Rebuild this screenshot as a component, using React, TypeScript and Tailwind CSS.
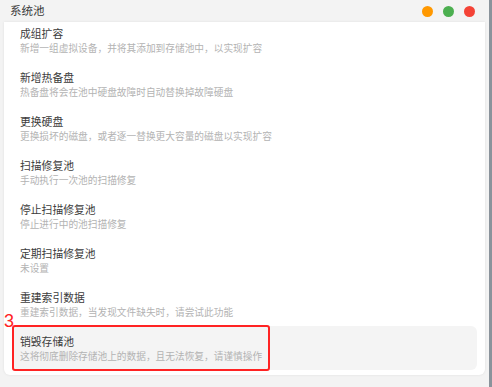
import React from "react";

interface PoolAction {
  title: string;
  desc: string;
}

const ACTIONS: PoolAction[] = [
  { title: "成组扩容", desc: "新增一组虚拟设备，并将其添加到存储池中，以实现扩容" },
  { title: "新增热备盘", desc: "热备盘将会在池中硬盘故障时自动替换掉故障硬盘" },
  { title: "更换硬盘", desc: "更换损坏的磁盘，或者逐一替换更大容量的磁盘以实现扩容" },
  { title: "扫描修复池", desc: "手动执行一次池的扫描修复" },
  { title: "停止扫描修复池", desc: "停止进行中的池扫描修复" },
  { title: "定期扫描修复池", desc: "未设置" },
  { title: "重建索引数据", desc: "重建索引数据，当发现文件缺失时，请尝试此功能" },
  { title: "销毁存储池", desc: "这将彻底删除存储池上的数据，且无法恢复，请谨慎操作" },
];

const FONT = { fontFamily: '"Noto Sans CJK SC", "Noto Sans", sans-serif' };

export default function App() {
  return (
    <div className="flex h-[387px] w-[492px] overflow-hidden bg-[#f3f3f3]" style={FONT}>
      <div className="flex flex-1 flex-col">
        {/* title bar */}
        <div className="flex h-[22px] shrink-0 items-center justify-between pl-[10px] pr-[14px]">
          <span className="text-[11.5px] leading-none text-[#3a3a3a]">系统池</span>
          <div className="flex items-center gap-[10px]">
            <span className="h-[11px] w-[11px] rounded-full bg-[#ff9800]" />
            <span className="h-[11px] w-[11px] rounded-full bg-[#4caf50]" />
            <span className="h-[11px] w-[11px] rounded-full bg-[#f44336]" />
          </div>
        </div>

        {/* panel */}
        <div className="mx-1 h-[353px] overflow-hidden rounded-b-md bg-white shadow-[0_0_3px_rgba(0,0,0,0.08)]">
          <div className="-mt-1 px-2">
            {ACTIONS.map((a, i) => {
              const last = i === ACTIONS.length - 1;
              return (
                <div
                  key={a.title}
                  className={`relative rounded-md px-2 py-[7px] ${last ? "bg-[#f4f4f4]" : ""}`}
                >
                  <p className="text-[10.8px] leading-4 text-[#3c3c3c]">{a.title}</p>
                  <p className="whitespace-nowrap text-[9.7px] leading-[14px] text-[#b3b3b3]">{a.desc}</p>
                  {last && (
                    <>
                      <div className="pointer-events-none absolute -top-px left-0 h-[46px] w-[258px] rounded-[3px] border-2 border-[#ff2323]" />
                      <span className="absolute -top-[14px] -left-[8px] text-[18px] leading-none text-[#ff2323]" style={{ fontFamily: '"Liberation Sans", sans-serif' }}>
                        3
                      </span>
                    </>
                  )}
                </div>
              );
            })}
          </div>
        </div>
      </div>
      <div className="w-[3px] bg-[#8a939b]" />
    </div>
  );
}
